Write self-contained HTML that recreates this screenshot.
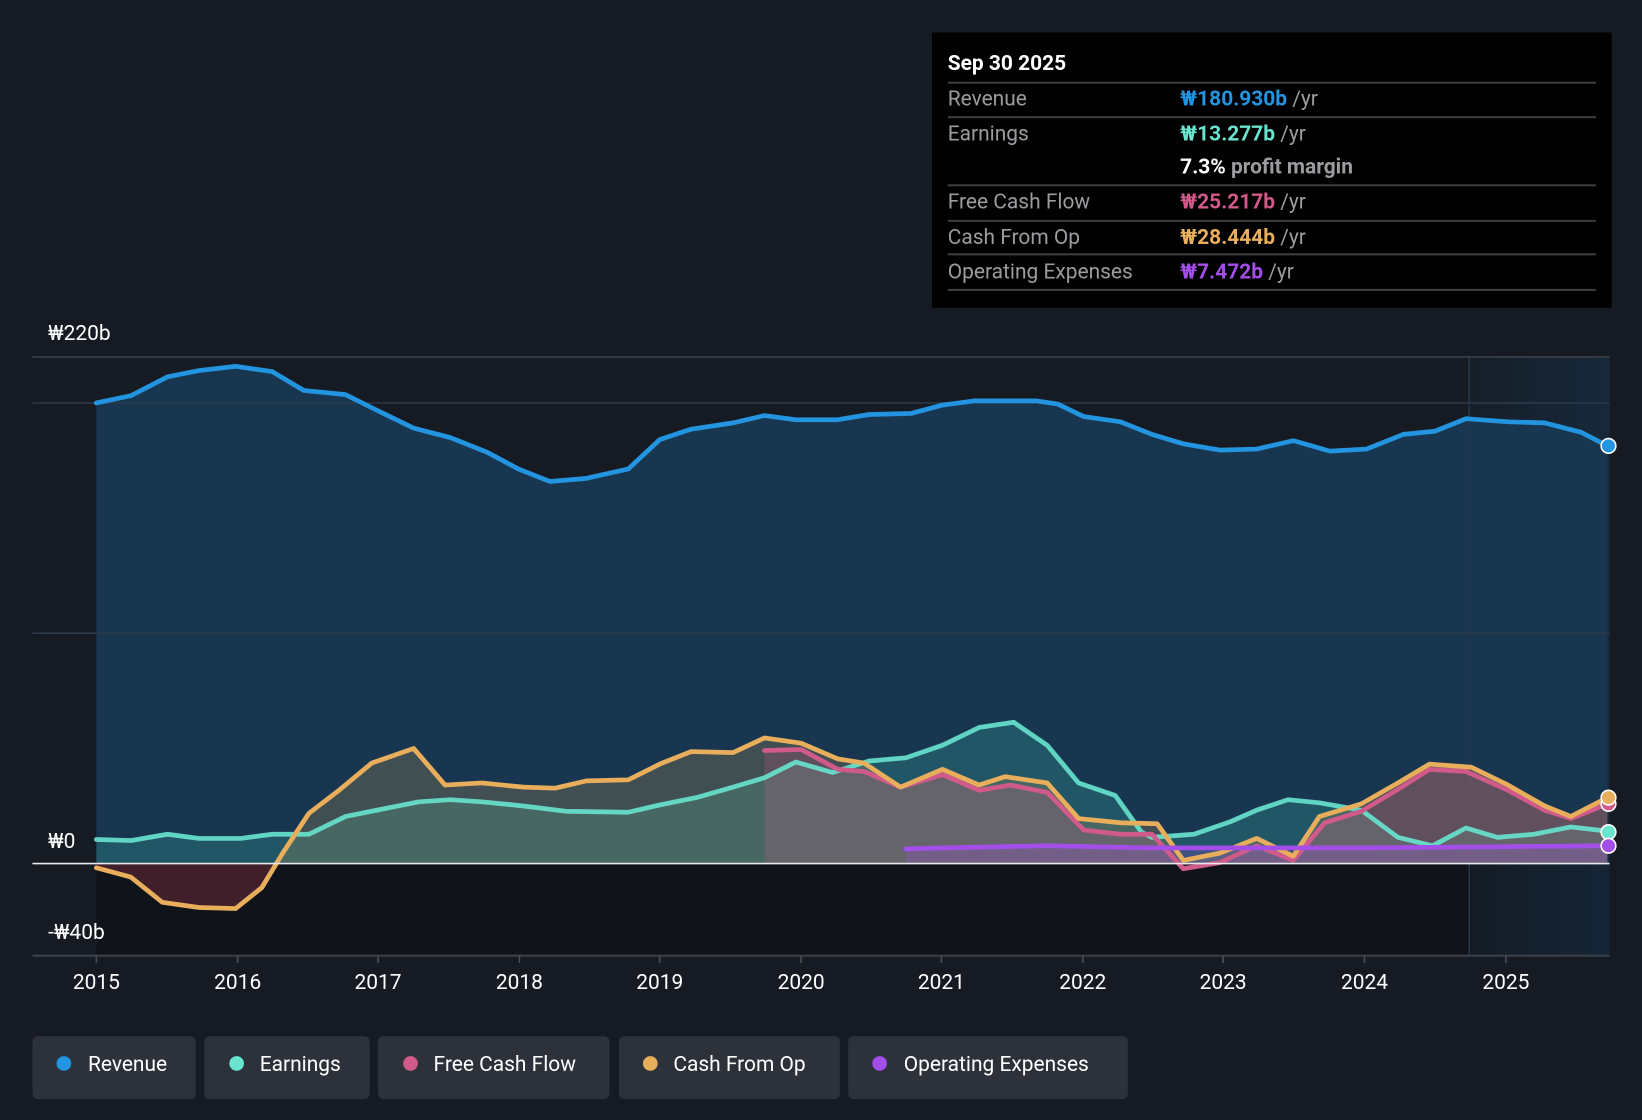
<!DOCTYPE html>
<html><head><meta charset="utf-8"><style>
html,body{margin:0;padding:0;background:#161c24;}
svg{display:block;font-family:"Roboto","Liberation Sans","Noto Sans CJK KR",sans-serif;}
</style></head><body>
<svg width="1642" height="1120" viewBox="0 0 1568 1070" preserveAspectRatio="none">
<rect width="1568" height="1070" fill="#161b23"/>
<defs>
<linearGradient id="fc" x1="0" y1="0" x2="1" y2="0"><stop offset="0" stop-color="#16202b"/><stop offset="1" stop-color="#18324a"/></linearGradient>
<clipPath id="above"><rect x="0" y="0" width="1568" height="825"/></clipPath>
<clipPath id="below"><rect x="0" y="825" width="1568" height="245"/></clipPath>
</defs>
<rect x="92" y="825" width="1445" height="88" fill="#10131a"/>
<rect x="1403" y="341" width="134" height="572" fill="url(#fc)" opacity="0.6"/>
<path d="M92,385 L125,378 160,360 190,354 225,350 260,355 290,373 330,377 360,392 395,409 430,418 465,432 495,448 525,460 560,457 600,448 630,420 660,410 700,404 730,397 760,401 800,401 830,396 870,395 900,387 930,383 990,383 1010,386 1035,398 1070,403 1100,415 1130,424 1165,430 1200,429 1235,421 1270,431 1305,429 1340,415 1370,412 1400,400 1440,403 1475,404 1510,413 1535,426 L1535,825 L92,825Z" fill="#183650"/>
<line x1="31" y1="341" x2="1537" y2="341" stroke="#3b4048" stroke-width="1.5"/>
<line x1="31" y1="385" x2="1537" y2="385" stroke="#2c3a4a" stroke-width="1.5"/>
<line x1="31" y1="605" x2="1537" y2="605" stroke="#2c3a4a" stroke-width="1.5"/>
<line x1="1403" y1="341" x2="1403" y2="913" stroke="#24384c" stroke-width="1.5"/>
<path d="M92,802 L125,803 160,797 190,801 230,801 260,797 295,797 330,780 365,773 400,766 430,764 460,766 500,770 540,775 600,776 630,769 665,762 700,752 730,743 760,728 795,738 830,727 865,724 900,712 935,695 968,690 1000,712 1030,748 1065,760 1090,795 1100,800 1140,797 1175,785 1200,774 1230,764 1260,767 1300,774 1335,800 1368,808 1400,791 1430,800 1465,797 1500,790 1535,794 L1535,825 L92,825Z" fill="#3ec9b0" opacity="0.22"/>
<g id="cfo">
<path clip-path="url(#above)" d="M92,829 L125,838 155,862 190,867 225,868 250,848 270,815 295,777 325,754 355,729 395,715 425,750 460,748 500,752 530,753 560,746 600,745 630,730 660,718 700,719 730,705 765,710 800,725 825,729 860,752 900,735 935,750 960,742 1000,748 1030,782 1070,786 1105,787 1130,822 1165,815 1200,801 1235,818 1260,780 1300,768 1335,748 1365,730 1405,733 1440,750 1475,770 1500,780 1535,762 L1535,825 L92,825Z" fill="#e8ae5c" opacity="0.2"/>
<path clip-path="url(#below)" d="M92,829 L125,838 155,862 190,867 225,868 250,848 270,815 L270,825 L92,825Z" fill="#b0384f" opacity="0.3"/>
</g>
<path d="M730,717 L765,716 800,735 825,737 860,752 900,740 935,755 965,750 1000,757 1035,793 1070,797 1100,797 1130,830 1165,824 1200,808 1235,822 1265,786 1300,775 1335,754 1365,735 1400,737 1440,755 1475,774 1500,782 1535,768 L1535,825 L730,825Z" fill="#d05a8a" opacity="0.22"/>
<path d="M865,811 L1535,808 L1535,825 L865,825Z" fill="#9a4de0" opacity="0.25"/>
<g fill="none" stroke-width="4.5" stroke-linejoin="round" stroke-linecap="round">
<polyline stroke="#68e4cf" points="92,802 125,803 160,797 190,801 230,801 260,797 295,797 330,780 365,773 400,766 430,764 460,766 500,770 540,775 600,776 630,769 665,762 700,752 730,743 760,728 795,738 830,727 865,724 900,712 935,695 968,690 1000,712 1030,748 1065,760 1090,795 1100,800 1140,797 1175,785 1200,774 1230,764 1260,767 1300,774 1335,800 1368,808 1400,791 1430,800 1465,797 1500,790 1535,794" opacity="0.9"/>
<polyline stroke="#d05a8a" points="730,717 765,716 800,735 825,737 860,752 900,740 935,755 965,750 1000,757 1035,793 1070,797 1100,797 1130,830 1165,824 1200,808 1235,822 1265,786 1300,775 1335,754 1365,735 1400,737 1440,755 1475,774 1500,782 1535,768"/>
<polyline stroke="#e8ae5c" points="92,829 125,838 155,862 190,867 225,868 250,848 270,815 295,777 325,754 355,729 395,715 425,750 460,748 500,752 530,753 560,746 600,745 630,730 660,718 700,719 730,705 765,710 800,725 825,729 860,752 900,735 935,750 960,742 1000,748 1030,782 1070,786 1105,787 1130,822 1165,815 1200,801 1235,818 1260,780 1300,768 1335,748 1365,730 1405,733 1440,750 1475,770 1500,780 1535,762"/>
<polyline stroke="#a34ee8" points="865,811 900,810 1000,808 1100,810 1300,810 1535,808"/>
<polyline stroke="#2394df" points="92,385 125,378 160,360 190,354 225,350 260,355 290,373 330,377 360,392 395,409 430,418 465,432 495,448 525,460 560,457 600,448 630,420 660,410 700,404 730,397 760,401 800,401 830,396 870,395 900,387 930,383 990,383 1010,386 1035,398 1070,403 1100,415 1130,424 1165,430 1200,429 1235,421 1270,431 1305,429 1340,415 1370,412 1400,400 1440,403 1475,404 1510,413 1535,426"/>
</g>
<line x1="31" y1="825" x2="1537" y2="825" stroke="#e6e8ea" stroke-width="1.5"/>
<line x1="31" y1="913" x2="1537" y2="913" stroke="#3b4048" stroke-width="2"/>
<g stroke="#fff" stroke-width="1.5">
<circle cx="1536" cy="426" r="7" fill="#2394df"/>
<circle cx="1536" cy="768" r="7" fill="#d05a8a"/>
<circle cx="1536" cy="762" r="7" fill="#e8ae5c"/>
<circle cx="1536" cy="795" r="7" fill="#68e4cf"/>
<circle cx="1536" cy="808" r="7" fill="#a34ee8"/>
</g>
<g stroke="#4a4f57" stroke-width="1.5">
<line x1="92" y1="913" x2="92" y2="920"/><line x1="227" y1="913" x2="227" y2="920"/><line x1="361" y1="913" x2="361" y2="920"/><line x1="496" y1="913" x2="496" y2="920"/><line x1="630" y1="913" x2="630" y2="920"/><line x1="765" y1="913" x2="765" y2="920"/><line x1="899" y1="913" x2="899" y2="920"/><line x1="1034" y1="913" x2="1034" y2="920"/><line x1="1168" y1="913" x2="1168" y2="920"/><line x1="1303" y1="913" x2="1303" y2="920"/><line x1="1438" y1="913" x2="1438" y2="920"/>
</g>
<g fill="#fff" font-size="20" text-anchor="middle">
<text x="92" y="945">2015</text><text x="227" y="945">2016</text><text x="361" y="945">2017</text><text x="496" y="945">2018</text><text x="630" y="945">2019</text><text x="765" y="945">2020</text><text x="899" y="945">2021</text><text x="1034" y="945">2022</text><text x="1168" y="945">2023</text><text x="1303" y="945">2024</text><text x="1438" y="945">2025</text>
</g>
<g fill="#fff" font-size="20">
<text x="46" y="325">₩220b</text><text x="46" y="810">₩0</text><text x="46" y="897">-₩40b</text>
</g>
<rect x="890" y="31" width="649" height="263" fill="#000"/>
<g stroke="#3a3d42" stroke-width="2">
<line x1="905" y1="79" x2="1524" y2="79"/><line x1="905" y1="112" x2="1524" y2="112"/><line x1="905" y1="177" x2="1524" y2="177"/><line x1="905" y1="211" x2="1524" y2="211"/><line x1="905" y1="243" x2="1524" y2="243"/><line x1="905" y1="277" x2="1524" y2="277"/>
</g>
<g font-size="20">
<text x="905" y="67" fill="#fff" font-weight="bold" font-size="20">Sep 30 2025</text>
<g fill="#9a9ca0">
<text x="905" y="101">Revenue</text><text x="905" y="134">Earnings</text><text x="905" y="199">Free Cash Flow</text><text x="905" y="233">Cash From Op</text><text x="905" y="266">Operating Expenses</text>
</g>
<text x="1127" y="101" font-weight="bold" fill="#2394df">₩180.930b <tspan fill="#9a9ca0" font-weight="normal">/yr</tspan></text>
<text x="1127" y="134" font-weight="bold" fill="#68e4cf">₩13.277b <tspan fill="#9a9ca0" font-weight="normal">/yr</tspan></text>
<text x="1127" y="166" font-weight="bold" fill="#fff">7.3% <tspan fill="#9a9ca0">profit margin</tspan></text>
<text x="1127" y="199" font-weight="bold" fill="#d05a8a">₩25.217b <tspan fill="#9a9ca0" font-weight="normal">/yr</tspan></text>
<text x="1127" y="233" font-weight="bold" fill="#e8ae5c">₩28.444b <tspan fill="#9a9ca0" font-weight="normal">/yr</tspan></text>
<text x="1127" y="266" font-weight="bold" fill="#a34ee8">₩7.472b <tspan fill="#9a9ca0" font-weight="normal">/yr</tspan></text>
</g>
<g fill="#2d313a">
<rect x="31" y="990" width="156" height="60" rx="5"/><rect x="195" y="990" width="158" height="60" rx="5"/><rect x="361" y="990" width="221" height="60" rx="5"/><rect x="591" y="990" width="211" height="60" rx="5"/><rect x="810" y="990" width="267" height="60" rx="5"/>
</g>
<circle cx="61" cy="1016" r="7" fill="#2394df"/><circle cx="226" cy="1016" r="7" fill="#68e4cf"/><circle cx="392" cy="1016" r="7" fill="#d05a8a"/><circle cx="621" cy="1016" r="7" fill="#e8ae5c"/><circle cx="840" cy="1016" r="7" fill="#a34ee8"/>
<g fill="#fff" font-size="20">
<text x="84" y="1023">Revenue</text><text x="248" y="1023">Earnings</text><text x="414" y="1023">Free Cash Flow</text><text x="643" y="1023">Cash From Op</text><text x="863" y="1023">Operating Expenses</text>
</g>
</svg>
</body></html>
